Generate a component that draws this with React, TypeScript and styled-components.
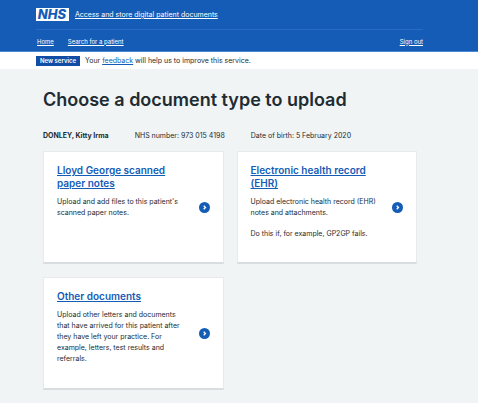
import React from "react";
import styled, { createGlobalStyle } from "styled-components";

const GlobalStyle = createGlobalStyle`
  *, *::before, *::after { box-sizing: border-box; }
  body {
    margin: 0;
    background: #f0f4f5;
    color: #212b32;
    font-family: Inter, "Liberation Sans", sans-serif;
    font-size: 7px;
    line-height: 11px;
  }
  h1, h2, p, ul { margin: 0; padding: 0; }
`;

const Header = styled.header`
  background: #145cb6;
  border-bottom: 1px solid #4a88d2;
`;

const Container = styled.div`
  padding: 0 55px 0 36px;
`;

const Brand = styled.div`
  display: flex;
  align-items: center;
  gap: 6px;
  height: 30px;
  border-bottom: 1px solid #286bc0;
`;

const Logo = styled.svg`
  display: block;
  flex: none;
  width: 33px;
  height: 13px;
`;

const LightLink = styled.a`
  color: #ffffff;
  text-underline-offset: 1px;
  text-decoration-thickness: 1px;
`;

const Nav = styled.nav`
  display: flex;
  align-items: center;
  gap: 14px;
  height: 21px;
  padding: 1px 0 0 1px;
  font-size: 6px;
`;

const SignOut = styled(LightLink)`
  margin-left: auto;
`;

const Banner = styled.div`
  background: #ffffff;
`;

const BannerRow = styled(Container)`
  display: flex;
  align-items: center;
  gap: 5px;
  height: 17px;
`;

const Tag = styled.strong`
  padding: 0 4px;
  background: #124da5;
  color: #ffffff;
  font-size: 6px;
  font-weight: 600;
  line-height: 10px;
`;

const TextLink = styled.a`
  color: #145cb6;
  text-underline-offset: 1px;
  text-decoration-thickness: 1px;
`;

const Main = styled.main`
  padding: 19px 61px 14px 43px;
`;

const Title = styled.h1`
  font-size: 18px;
  font-weight: 600;
  line-height: 24px;
`;

const Patient = styled.div`
  display: flex;
  gap: 26px;
  margin: 18px 0 10px;
`;

const Cards = styled.ul`
  display: grid;
  grid-template-columns: 1fr 1fr;
  grid-auto-rows: 113px;
  gap: 13px;
  list-style: none;
`;

const Card = styled.li`
  display: flex;
  align-items: center;
  justify-content: space-between;
  padding: 0 13px;
  background: #ffffff;
  border: 1px solid #e6eaec;
  border-bottom: 2px solid #d8dde0;
`;

const CardBody = styled.div`
  align-self: flex-start;
  width: 132px;
  padding-top: 12px;
`;

const CardTitle = styled.h2`
  margin-bottom: 6px;
  font-size: 10px;
  font-weight: 600;
  line-height: 13px;
`;

const CardText = styled.p`
  & + & { margin-top: 10px; }
`;

const Chevron = styled.svg`
  flex: none;
  width: 11px;
  height: 11px;
`;

const documents = [
  {
    title: "Lloyd George scanned paper notes",
    text: ["Upload and add files to this patient's scanned paper notes."],
  },
  {
    title: "Electronic health record (EHR)",
    text: [
      "Upload electronic health record (EHR) notes and attachments.",
      "Do this if, for example, GP2GP fails.",
    ],
  },
  {
    title: "Other documents",
    text: [
      "Upload other letters and documents that have arrived for this patient after they have left your practice. For example, letters, test results and referrals.",
    ],
  },
];

export default function App() {
  return (
    <>
      <GlobalStyle />
      <Header>
        <Container>
          <Brand>
            <Logo viewBox="0 0 33 13" role="img" aria-label="NHS">
              <rect width="33" height="13" fill="#ffffff" />
              <text
                x="16"
                y="11"
                textAnchor="middle"
                fill="#145cb6"
                fontFamily="Inter, sans-serif"
                fontSize="13"
                fontWeight="800"
                fontStyle="italic"
              >
                NHS
              </text>
            </Logo>
            <LightLink href="#">Access and store digital patient documents</LightLink>
          </Brand>
          <Nav>
            <LightLink href="#">Home</LightLink>
            <LightLink href="#">Search for a patient</LightLink>
            <SignOut href="#">Sign out</SignOut>
          </Nav>
        </Container>
      </Header>
      <Banner>
        <BannerRow>
          <Tag>New service</Tag>
          <p>
            Your <TextLink href="#">feedback</TextLink> will help us to improve this service.
          </p>
        </BannerRow>
      </Banner>
      <Main>
        <Title>Choose a document type to upload</Title>
        <Patient>
          <strong>DONLEY, Kitty Irma</strong>
          <span>NHS number: 973 015 4198</span>
          <span>Date of birth: 5 February 2020</span>
        </Patient>
        <Cards>
          {documents.map((doc) => (
            <Card key={doc.title}>
              <CardBody>
                <CardTitle>
                  <TextLink href="#">{doc.title}</TextLink>
                </CardTitle>
                {doc.text.map((line) => (
                  <CardText key={line}>{line}</CardText>
                ))}
              </CardBody>
              <Chevron viewBox="0 0 11 11" aria-hidden="true">
                <circle cx="5.5" cy="5.5" r="5.5" fill="#145cb6" />
                <path d="M4.7 3.7 6.5 5.5 4.7 7.3" fill="none" stroke="#ffffff" strokeWidth="1.3" />
              </Chevron>
            </Card>
          ))}
        </Cards>
      </Main>
    </>
  );
}
